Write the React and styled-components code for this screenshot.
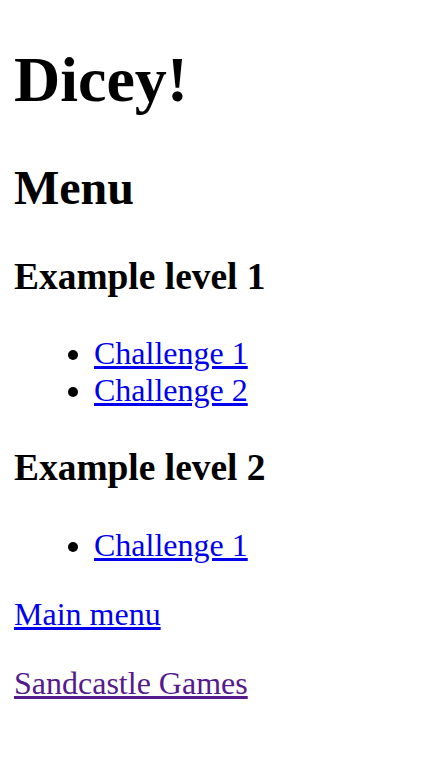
import React from 'react'
import styled, { createGlobalStyle } from 'styled-components'

const GlobalStyle = createGlobalStyle`
  body {
    margin: 0 14px 14px;
    font-family: "Liberation Serif", "Times New Roman", serif;
    font-size: 32px;
    background: #fff;
    color: #000;
  }
`

const Title = styled.h1`
  font-size: 64px;
  margin: 42.88px 0;
`

const MenuHeading = styled.h2`
  font-size: 48px;
  margin: 39.84px 0;
`

const LevelHeading = styled.h3`
  font-size: 37.44px;
  margin: 37.44px 0;
`

const List = styled.ul`
  margin: 32px 0;
  padding-left: 80px;
`

const Link = styled.a`
  color: ${p => (p.$visited ? '#551a8b' : '#0000ee')};
  text-decoration: underline;
`

const Para = styled.p`
  margin: 32px 0;
`

const levels = [
  { name: 'Example level 1', challenges: ['Challenge 1', 'Challenge 2'] },
  { name: 'Example level 2', challenges: ['Challenge 1'] },
]

export default function App() {
  return (
    <>
      <GlobalStyle />
      <Title>Dicey!</Title>
      <MenuHeading>Menu</MenuHeading>
      {levels.map(level => (
        <div key={level.name}>
          <LevelHeading>{level.name}</LevelHeading>
          <List>
            {level.challenges.map(c => (
              <li key={c}>
                <Link href="#">{c}</Link>
              </li>
            ))}
          </List>
        </div>
      ))}
      <Para>
        <Link href="#">Main menu</Link>
      </Para>
      <Para>
        <Link href="#" $visited>Sandcastle Games</Link>
      </Para>
    </>
  )
}
